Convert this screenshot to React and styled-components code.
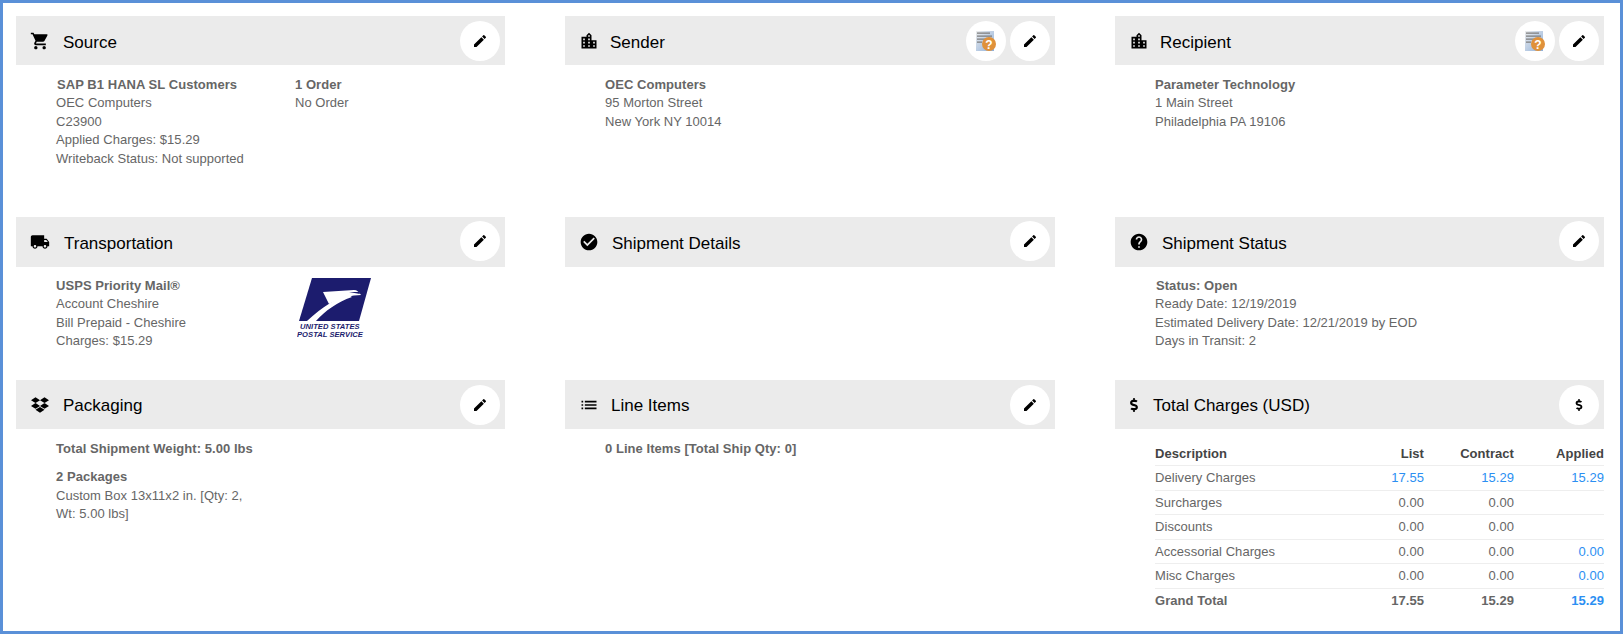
import React from "react";
import styled, { createGlobalStyle } from "styled-components";
import { MdShoppingCart, MdEdit, MdLocalShipping, MdCheckCircle, MdHelp, MdList, MdLocationCity } from "react-icons/md";
import { FaDropbox, FaDollarSign } from "react-icons/fa";

const Global = createGlobalStyle`
  html, body { margin: 0; padding: 0; background: #fff; }
  body { font-family: "Liberation Sans", Arial, sans-serif; }
`;
const Frame = styled.div`
  box-sizing: border-box; width: 1623px; height: 634px; overflow: hidden;
  border: 3px solid #5a90d8; background: #fff; padding: 13px 16px 0 13px;
  display: grid; grid-template-columns: 489px 490px 489px; column-gap: 60px;
  grid-template-rows: 201px 163px 1fr;
`;
const Panel = styled.section`min-width: 0;`;
const Header = styled.header`
  height: ${p => (p.$tall ? 50 : 49)}px; background: #ebebeb; display: flex; align-items: center;
  padding-left: 14px; color: #000;
`;
const TitleIcon = styled.span`
  display: flex; width: ${p => p.$w || 20}px; justify-content: center; margin-right: ${p => p.$gap ?? 13}px;
  font-size: ${p => p.$size || 20}px;
`;
const Title = styled.h2`margin: 0; font-size: 17px; font-weight: 400; line-height: 20px; position: relative; top: ${p => p.$top ?? 2}px;`;
const Actions = styled.div`margin-left: auto; margin-right: 5px; display: flex; gap: 4px; position: relative; top: ${p => (p.$tall ? -1 : 0)}px;`;
const RoundButton = styled.button`
  width: 40px; height: 40px; border-radius: 50%; background: #fff; border: 0; padding: 0; color: #000;
  display: flex; align-items: center; justify-content: center; font-size: 16px;
`;
const Body = styled.div`
  display: flex; padding: ${p => (p.$tall ? 10 : 11)}px 0 0 40px; font-size: 13px; line-height: 18.4px; color: #666; letter-spacing: .03px;
`;
const Column = styled.div`width: ${p => p.$w || "auto"};`;
const Strong = styled.div`font-weight: 700; letter-spacing: .05px; margin-bottom: ${p => p.$mb || 0}px; padding-left: ${p => p.$pl || 0}px;`;
const Table = styled.table`
  width: 449px; margin: 13px 0 0 40px; border-collapse: collapse; font-size: 13px; color: #666; letter-spacing: .05px;
  th, td { padding: 0; height: 23.5px; border-bottom: 1px solid #eee; text-align: right; font-weight: 400; }
  th { color: #444; font-weight: 700; height: 23px; }
  th:first-child, td:first-child { text-align: left; }
  td + td { width: 90px; }
  th:nth-child(2), td:nth-child(2) { width: 90px; }
  tr:last-child td { border-bottom: 0; font-weight: 700; }
`;
const Blue = styled.span`color: #2b8ff2;`;
const LogoWrap = styled.div`margin: 1px 0 0 2px; width: 76px; height: 62px;`;

const Report = () => (
  <svg width="20" height="20" viewBox="0 0 20 20">
    <defs>
      <linearGradient id="rp" x1="0" y1="0" x2="1" y2="1"><stop offset="0" stopColor="#ececec" /><stop offset="1" stopColor="#8eb0dc" /></linearGradient>
    </defs>
    <rect x="0" y="0" width="18" height="20" fill="url(#rp)" />
    <path d="M1 1.5h13v1.2H1zM1 4.5h15v1.2H1zM1 7.5h11v1.2H1zM1 10.5h5v1.2H1z" fill="#7d7d7d" />
    <circle cx="13" cy="13" r="7" fill="#e0913a" />
    <text x="13" y="17.5" textAnchor="middle" fontFamily="Liberation Sans" fontWeight="700" fontSize="12" fill="#fff">?</text>
  </svg>
);
const Usps = () => (
  <svg width="76" height="62" viewBox="0 0 76 62">
    <path d="M15 0H74L62 43H2Z" fill="#1c1c6e" />
    <path d="M10 43C26 28 40 20 52 17L55 19C40 24 28 33 19 43Z" fill="#fff" />
    <path d="M26 14L57 12C60 12 62 14 64 17C55 17 44 20 32 26Z" fill="#fff" />
    <path d="M52 14L62 14L63 16Z" fill="#1c1c6e" />
    <text x="3" y="51" fontFamily="Liberation Sans" fontWeight="700" fontStyle="italic" fontSize="7.6" fill="#1c1c6e">UNITED STATES</text>
    <text x="0" y="59" fontFamily="Liberation Sans" fontWeight="700" fontStyle="italic" fontSize="7.6" fill="#1c1c6e">POSTAL SERVICE</text>
  </svg>
);

const Card = ({ icon, title, gap, size, iconWidth, extra, action, tall, titleTop, children }) => (
  <Panel>
    <Header $tall={tall}>
      <TitleIcon $gap={gap} $size={size} $w={iconWidth}>{icon}</TitleIcon>
      <Title $top={titleTop}>{title}</Title>
      <Actions $tall={tall}>
        {extra && <RoundButton><Report /></RoundButton>}
        <RoundButton>{action || <MdEdit />}</RoundButton>
      </Actions>
    </Header>
    {children}
  </Panel>
);

const rows = [
  ["Delivery Charges", <Blue>17.55</Blue>, <Blue>15.29</Blue>, <Blue>15.29</Blue>],
  ["Surcharges", "0.00", "0.00", ""],
  ["Discounts", "0.00", "0.00", ""],
  ["Accessorial Charges", "0.00", "0.00", <Blue>0.00</Blue>],
  ["Misc Charges", "0.00", "0.00", <Blue>0.00</Blue>],
  ["Grand Total", "17.55", "15.29", <Blue>15.29</Blue>],
];

export default function App() {
  return (
    <>
      <Global />
      <Frame>
        <Card icon={<MdShoppingCart />} title="Source">
          <Body>
            <Column $w="239px">
              <Strong $pl={1}>SAP B1 HANA SL Customers</Strong>
              OEC Computers<br />C23900<br />Applied Charges: $15.29<br />Writeback Status: Not supported
            </Column>
            <Column><Strong>1 Order</Strong>No Order</Column>
          </Body>
        </Card>
        <Card icon={<MdLocationCity />} title="Sender" gap={11} extra>
          <Body><Column><Strong>OEC Computers</Strong>95 Morton Street<br />New York NY 10014</Column></Body>
        </Card>
        <Card icon={<MdLocationCity />} title="Recipient" gap={11} extra>
          <Body><Column><Strong>Parameter Technology</Strong>1 Main Street<br />Philadelphia PA 19106</Column></Body>
        </Card>

        <Card icon={<MdLocalShipping />} title="Transportation" gap={14} tall>
          <Body $tall>
            <Column $w="239px">
              <Strong>USPS Priority Mail®</Strong>
              Account Cheshire<br />Bill Prepaid - Cheshire<br />Charges: $15.29
            </Column>
            <LogoWrap><Usps /></LogoWrap>
          </Body>
        </Card>
        <Card icon={<MdCheckCircle />} title="Shipment Details" tall />
        <Card icon={<MdHelp />} title="Shipment Status" tall>
          <Body $tall><Column><Strong $pl={1}>Status: Open</Strong>Ready Date: 12/19/2019<br />Estimated Delivery Date: 12/21/2019 by EOD<br />Days in Transit: 2</Column></Body>
        </Card>

        <Card icon={<FaDropbox />} title="Packaging" size={18} titleTop={1}>
          <Body>
            <Column $w="220px">
              <Strong $mb={10}>Total Shipment Weight: 5.00 lbs</Strong>
              <Strong>2 Packages</Strong>
              Custom Box 13x11x2 in. [Qty: 2,<br />Wt: 5.00 lbs]
            </Column>
          </Body>
        </Card>
        <Card icon={<MdList />} title="Line Items" gap={12} titleTop={1}>
          <Body><Column><Strong>0 Line Items [Total Ship Qty: 0]</Strong></Column></Body>
        </Card>
        <Card icon={<FaDollarSign />} title="Total Charges (USD)" iconWidth={10} size={14} gap={14} titleTop={1} action={<FaDollarSign size={12} />}>
          <Table>
            <thead><tr><th>Description</th><th>List</th><th>Contract</th><th>Applied</th></tr></thead>
            <tbody>
              {rows.map(r => (
                <tr key={r[0]}>{r.map((c, i) => <td key={i}>{c}</td>)}</tr>
              ))}
            </tbody>
          </Table>
        </Card>
      </Frame>
    </>
  );
}
